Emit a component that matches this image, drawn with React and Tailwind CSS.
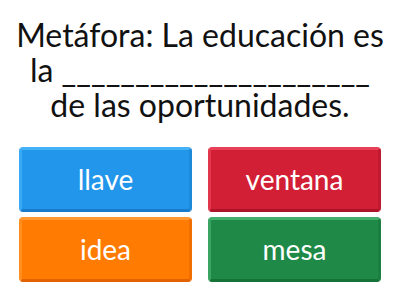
export default function App() {
  const btn = [
    { t: "llave", face: "bg-[#2196ea]", top: "border-t-[#45b2f7] border-l-[#3aa9f3]", bot: "border-b-[#177ccd] border-r-[#1d8ad9]" },
    { t: "ventana", face: "bg-[#d21f36]", top: "border-t-[#e84057] border-l-[#e2364c]", bot: "border-b-[#ad1428] border-r-[#c01a30]" },
    { t: "idea", face: "bg-[#ff7b02]", top: "border-t-[#ff9a33] border-l-[#ff8e20]", bot: "border-b-[#e26200] border-r-[#f06f00]" },
    { t: "mesa", face: "bg-[#1f8a48]", top: "border-t-[#43ad6c] border-l-[#3aa462]", bot: "border-b-[#157339] border-r-[#1a7f40]" },
  ];
  return (
    <div className="w-[400px] h-[300px] bg-white overflow-hidden" style={{ fontFamily: "Lato, 'Open Sans', sans-serif" }}>
      <div className="pt-[17px] text-center text-[32px] leading-[35px] text-[#111]">
        <div>Metáfora: La educación es</div>
        <div>la _____________________</div>
        <div>de las oportunidades.</div>
      </div>
      <div className="mt-[25px] px-[19px] grid grid-cols-2 gap-x-4 gap-y-[5px]">
        {btn.map((b) => (
          <div
            key={b.t}
            className={`h-[65px] rounded-[4px] border-[3px] ${b.face} ${b.top} ${b.bot} flex items-center justify-center text-white text-[28px] pb-[2px]`}
          >
            {b.t}
          </div>
        ))}
      </div>
    </div>
  );
}
